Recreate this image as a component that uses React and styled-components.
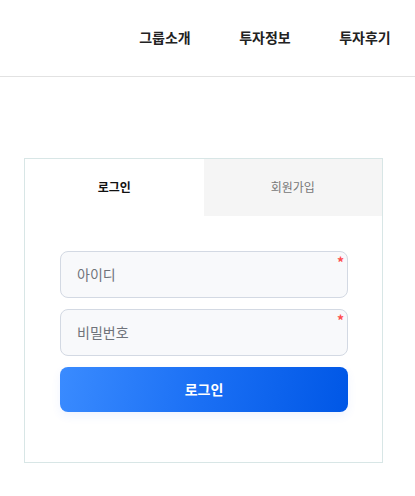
import React from 'react';
import styled, { createGlobalStyle } from 'styled-components';

const GlobalStyle = createGlobalStyle`
  body {
    margin: 0;
    background: #fff;
    font-family: "Noto Sans CJK KR", "Noto Sans", sans-serif;
  }
  * { box-sizing: border-box; }
`;

const Header = styled.header`
  height: 77px;
  border-bottom: 1px solid #e2e2e2;
  display: flex;
  justify-content: flex-end;
  align-items: center;
`;

const Nav = styled.nav`
  display: flex;
  align-items: center;
`;

const NavItem = styled.a`
  width: 100px;
  text-align: center;
  font-size: 14px;
  font-weight: 700;
  color: #222;
  text-decoration: none;
  margin-bottom: 2px;
`;

const Main = styled.main`
  padding: 81px 32px 0 24px;
`;

const Card = styled.div`
  width: 359px;
  border: 1px solid #d8e6e6;
  background: #fff;
`;

const Tabs = styled.div`
  display: flex;
  height: 57px;
`;

const Tab = styled.button`
  flex: 1;
  border: none;
  font-family: inherit;
  font-size: 12px;
  font-weight: ${p => (p.$active ? 700 : 400)};
  color: ${p => (p.$active ? '#111' : '#777')};
  background: ${p => (p.$active ? '#fff' : '#f5f5f5')};
  padding: 0 0 2px;
  cursor: pointer;
`;

const Form = styled.form`
  padding: 35px 34px 50px 35px;
  display: flex;
  flex-direction: column;
  gap: 11px;
`;

const Field = styled.div`
  position: relative;
`;

const Input = styled.input`
  width: 100%;
  height: 47px;
  border: 1px solid #d3d9e3;
  border-radius: 8px;
  background: #f8f9fb;
  padding: 0 16px 2px;
  font-family: inherit;
  font-size: 14px;
  color: #333;
  outline: none;
  &::placeholder { color: #6f737a; }
`;

const Required = styled.span`
  position: absolute;
  top: 4px;
  right: 4px;
  color: #ff4d4d;
  font-size: 14px;
  font-weight: 700;
  line-height: 1;
`;

const Submit = styled.button`
  height: 45px;
  border: none;
  border-radius: 8px;
  background: linear-gradient(100deg, #3a8bff 0%, #1a6ff4 50%, #0057e6 100%);
  box-shadow: 0 4px 10px rgba(60, 120, 255, 0.08);
  color: #fff;
  font-family: inherit;
  font-size: 14px;
  font-weight: 700;
  padding-bottom: 2px;
  cursor: pointer;
`;

export default function App() {
  return (
    <>
      <GlobalStyle />
      <Header>
        <Nav>
          <NavItem href="#">그룹소개</NavItem>
          <NavItem href="#">투자정보</NavItem>
          <NavItem href="#">투자후기</NavItem>
        </Nav>
      </Header>
      <Main>
        <Card>
          <Tabs>
            <Tab $active>로그인</Tab>
            <Tab>회원가입</Tab>
          </Tabs>
          <Form onSubmit={e => e.preventDefault()}>
            <Field>
              <Input placeholder="아이디" />
              <Required>*</Required>
            </Field>
            <Field>
              <Input type="password" placeholder="비밀번호" />
              <Required>*</Required>
            </Field>
            <Submit type="submit">로그인</Submit>
          </Form>
        </Card>
      </Main>
    </>
  );
}
